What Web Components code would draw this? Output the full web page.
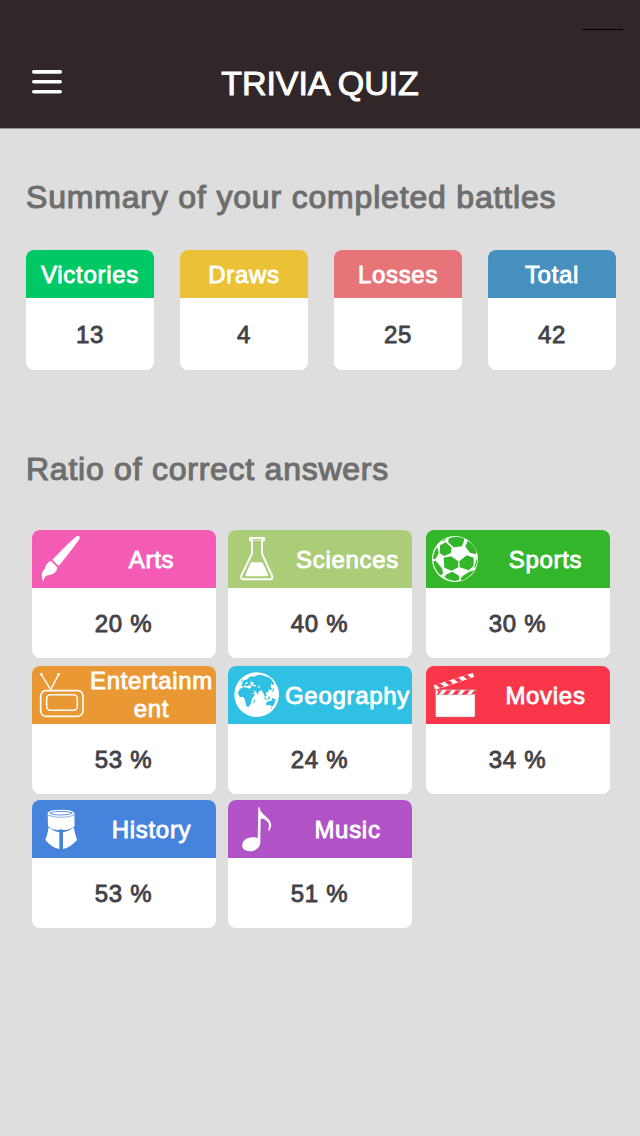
<!DOCTYPE html>
<html lang="en">
<head>
<meta charset="utf-8">
<title>Trivia Quiz</title>
<style>
  body {
    margin: 0;
    background: #dedede;
    font-family: "Liberation Sans", Arial, sans-serif;
  }
</style>
</head>
<body>
<quiz-app></quiz-app>

<script>
const ICONS = {
  arts: `
    <path d="M137 35Q143 31 148 34Q151 38 148 43Q122 80 86 123L67 104Q103 66 137 35Z"/>
    <path d="M63 108L82 127Q80 146 62 149L48 152Q41 158 40 171Q32 153 38 139Q46 133 46 126Q51 112 63 108Z"/>`,
  sciences: `
    <path fill="none" stroke="#fff" stroke-width="6" stroke-linejoin="round" d="M72 39H114V46H108V86L138 152Q141 163 132 163H53Q43 163 46 152L78 86V46H72Z"/>
    <path fill="none" stroke="#fff" stroke-width="2" d="M79 46H107"/>
    <path d="M75 112H109L126 147Q128 154 122 154H63Q57 154 59 147Z"/>`,
  sports: `
    <circle cx="93" cy="102" r="69"/>
    <g fill="#34b62a">
      <path d="M75 40Q95 31 119 40L121 45L114 64L89 67L72 51Z"/>
      <path d="M48 61L65 52L83 68L81 84L60 93L47 84Z"/>
      <path d="M124 65L131 47Q151 58 158 82L155 88L138 83Z"/>
      <path d="M59 98L81 94L103 109V127L83 137L61 128Z"/>
      <path d="M106 109L128 91L149 98V122L134 136L107 127Z"/>
      <path d="M27 101Q28 81 40 66L44 84L34 103Z"/>
      <path d="M28 109L35 107L55 131L57 146L50 151Q32 137 28 109Z"/>
      <path d="M69 148L84 140L105 152L106 164L94 168Q78 168 66 160L61 154Z"/>
      <path d="M119 151L136 140L151 136Q141 154 118 165L110 166L111 158Z"/>
      <path d="M126 41Q139 46 147 55L136 47Z"/>
      <path d="M67 43L53 51Q59 44 67 40Z"/>
      <path d="M157 105L160 100Q160 116 154 129L151 127Z"/>
    </g>`,
  entertainment: `
    <g fill="none" stroke="#fff" stroke-linejoin="round" stroke-linecap="round">
      <rect x="32" y="92" width="127" height="77" rx="16" stroke-width="5"/>
      <rect x="50" y="104" width="92" height="47" rx="12" stroke-width="4.5"/>
      <path stroke-width="4" d="M34 43L62 89L86 43"/>
    </g>
    <circle cx="34" cy="43" r="4"/>
    <circle cx="86" cy="43" r="4"/>`,
  geography: `
    <circle cx="92" cy="104" r="67"/>
    <g fill="#30c0e4">
      <path d="M47 68L55 60L62 59L68 53L74 56L77 62L72 66L75 70L73 77L67 76L63 79L56 76L52 80L45 77L50 72Z"/>
      <path d="M68 54L74 49L85 50L92 46L108 44L113 48L127 51L137 59L145 72L140 75L135 70L134 82L139 87L134 91L128 88L127 96L119 98L122 107L117 111L112 99L106 91L99 94L95 105L89 93L82 91L87 97L79 101L71 86L77 80L74 76L77 62Z"/>
      <path d="M42 87L53 81L65 84L74 87L79 101L87 102L80 113L76 121L76 130L67 141L61 139L57 121L53 112L41 110L36 101L38 93Z"/>
      <path d="M120 129L127 123L131 124L137 121L140 116L145 121L147 127L142 137L135 139L130 134L122 137Z"/>
      <path d="M84 121L88 117L86 127L81 131ZM112 109L121 116L124 121L117 118ZM126 112L132 109L130 119L125 118ZM136 113L148 118L150 123L139 119ZM134 143L140 142L136 147ZM45 62L51 57L48 66ZM138 94L142 84L144 86L141 97Z"/>
    </g>
    <path d="M73 69L85 65L80 73L91 76L87 80L76 76ZM97 78L101 77L100 84L96 83ZM56 69L65 66L66 70L57 73Z"/>`,
  movies: `
    <path d="M35 89H156L153 104V168Q153 171 149 171H39Q35 171 35 167Z"/>
    <path d="M29 76L146 39L150 51L38 89L32 87Z"/>
    <g fill="#fa364b">
      <path d="M39 91H54L44 104H37L43 98ZM68 91H82L71 104H56ZM96 91H110L99 104H84ZM124 91H138L128 104H112ZM151 91H156L154 103H141Z"/>
      <path d="M35 74L48 70L61 80L48 84ZM62 66L76 61L87 71L75 76ZM89 57L103 53L114 62L102 67ZM117 48L130 44L141 54L129 58Z"/>
      <path d="M38 87L54 83L58 89H39Z"/>
    </g>
    <path fill="none" stroke="#a88" stroke-width="1.5" d="M34 77L33 89H156V96M39 104H151M34 90V169Q36 171 40 171H151L153 168V105"/>`,
  history: `
    <path d="M53 54Q56 44 93 44Q130 44 133 54L134 94Q116 108 99 104Q93 101 87 104Q70 108 54 94Z"/>
    <path d="M56 97Q70 109 88 112V162Q65 158 46 135Q53 118 56 97Z"/>
    <path d="M131 97Q118 109 99 112V162Q121 158 141 135Q135 118 131 97Z"/>
    <path fill="none" stroke="#4583dc" stroke-width="2.5" d="M60 54Q69 49 93 49Q118 49 127 54Q119 60 93 60Q67 60 60 54Z"/>
    <path fill="none" stroke="#4583dc" stroke-width="2" d="M54 60Q70 67 93 67Q117 67 132 60"/>`,
  music: `
    <path d="M97 38Q99 32 101 38Q102 50 119 64Q139 82 135 95L130 107Q126 108 127 102Q134 84 117 74Q108 67 104 73L103 145Q99 164 77 169Q51 170 48 152Q50 129 78 127Q89 125 95 130Z"/>`
};

const RESULTS = [
  ['Victories', 13, '#00c864'],
  ['Draws', 4, '#ebc138'],
  ['Losses', 25, '#e77479'],
  ['Total', 42, '#4590bf']
];

const CATEGORIES = [
  ['arts', 'Arts', 20, '#f45bb5'],
  ['sciences', 'Sciences', 40, '#abcd77'],
  ['sports', 'Sports', 30, '#34b62a'],
  ['entertainment', 'Entertainment', 53, '#e99834'],
  ['geography', 'Geography', 24, '#30c0e4'],
  ['movies', 'Movies', 34, '#fa364b'],
  ['history', 'History', 53, '#4583dc'],
  ['music', 'Music', 51, '#b153c7']
];

class QuizHeader extends HTMLElement {
  constructor() {
    super();
    this.attachShadow({ mode: 'open' }).innerHTML = `
      <style>
        :host {
          display: block;
          box-sizing: border-box;
          height: 129px;
          background: #312728;
          border-bottom: 1px solid #999595;
          color: #fff;
        }
        .status {
          display: flex;
          justify-content: flex-end;
          align-items: flex-end;
          height: 30px;
          padding-right: 17px;
        }
        .status span {
          width: 41px;
          height: 1px;
          background: #000;
        }
        .bar {
          display: grid;
          grid-template-columns: 160px 1fr 160px;
          align-items: center;
          height: 106px;
        }
        svg {
          display: block;
          margin: 0 0 3px 32px;
        }
        h1 {
          margin: 0;
          text-align: center;
          font-size: 34px;
          line-height: 40px;
          font-weight: 400;
          letter-spacing: -.1px;
          -webkit-text-stroke: 1px;
        }
      </style>
      <div class="status"><span></span></div>
      <div class="bar">
        <svg width="30" height="24" fill="#fff">
          <rect width="30" height="3.7" rx="1.8"/>
          <rect y="9.9" width="30" height="3.7" rx="1.8"/>
          <rect y="19.9" width="30" height="3.7" rx="1.8"/>
        </svg>
        <h1><slot></slot></h1>
      </div>
    `;
  }
}

class SectionTitle extends HTMLElement {
  constructor() {
    super();
    this.attachShadow({ mode: 'open' }).innerHTML = `
      <style>
        :host {
          display: block;
          padding-left: 26px;
          letter-spacing: .82px;
        }
        h2 {
          margin: 0;
          color: #6e6e6e;
          font-size: 32px;
          line-height: 40px;
          font-weight: 400;
          white-space: nowrap;
          -webkit-text-stroke: 1.1px;
        }
      </style>
      <h2><slot></slot></h2>
    `;
  }
}

class StatCard extends HTMLElement {
  connectedCallback() {
    const icon = this.getAttribute('icon');
    // the second row of icons sits one pixel lower in its header
    const top = ['entertainment', 'geography', 'movies'].includes(icon) ? 18 : 15;
    this.attachShadow({ mode: 'open' }).innerHTML = `
      <style>
        :host {
          display: flex;
          flex-direction: column;
          overflow: hidden;
          border-radius: 8px;
          background: #fff;
          font-size: 24px;
          line-height: 28px;
          letter-spacing: .7px;
          text-align: center;
          -webkit-text-stroke: .85px;
        }
        .head {
          display: flex;
          align-items: center;
          height: ${icon ? 58 : 48}px;
          background: ${this.getAttribute('color')};
          color: #fff;
        }
        svg {
          flex: none;
          width: 58px;
          height: 58px;
          -webkit-text-stroke: 0;
        }
        .label {
          flex: 1;
          min-width: 0;
          overflow-wrap: anywhere;
          padding-top: ${icon === 'entertainment' ? 0 : 2}px;
          margin-left: ${icon ? -3 : 0}px;
        }
        .value {
          flex: 1;
          display: flex;
          align-items: center;
          justify-content: center;
          padding-top: 2px;
          padding-right: ${icon ? 1 : 0}px;
          color: #434247;
        }
      </style>
      <div class="head">
        ${icon ? `<svg viewBox="6 ${top} 174 174" fill="#fff">${ICONS[icon]}</svg>` : ''}
        <div class="label">${this.getAttribute('label')}</div>
      </div>
      <div class="value"><span><slot></slot></span></div>
    `;
  }
}

class QuizApp extends HTMLElement {
  constructor() {
    super();
    this.attachShadow({ mode: 'open' });
    this.render();
  }

  render() {
    this.shadowRoot.innerHTML = `
      <style>
        :host { display: block; width: 640px; min-height: 1136px; }
        .summary-title { padding-top: 48px; }
        .summary {
          display: grid;
          grid-template-columns: repeat(4, 128px);
          grid-template-rows: 120px;
          gap: 26px;
          padding: 33px 0 0 26px;
        }
        .ratio-title { padding-top: 79px; letter-spacing: .75px; }
        .ratio {
          display: grid;
          grid-template-columns: 196px 198px 184px;
          grid-template-rows: 136px 134px 128px;
          padding: 41px 0 0 32px;
        }
        .ratio stat-card { width: 184px; height: 128px; }
      </style>
      <quiz-header>TRIVIA QUIZ</quiz-header>
      <section-title class="summary-title">Summary of your completed battles</section-title>
      <div class="summary">
        ${RESULTS.map(([label, value, color]) =>
          `<stat-card label="${label}" color="${color}">${value}</stat-card>`).join('')}
      </div>
      <section-title class="ratio-title">Ratio of correct answers</section-title>
      <div class="ratio">
        ${CATEGORIES.map(([icon, label, value, color]) =>
          `<stat-card icon="${icon}" label="${label}" color="${color}">${value} %</stat-card>`).join('')}
      </div>
    `;
  }
}

customElements.define('quiz-header', QuizHeader);
customElements.define('section-title', SectionTitle);
customElements.define('stat-card', StatCard);
customElements.define('quiz-app', QuizApp);
</script>
</body>
</html>
